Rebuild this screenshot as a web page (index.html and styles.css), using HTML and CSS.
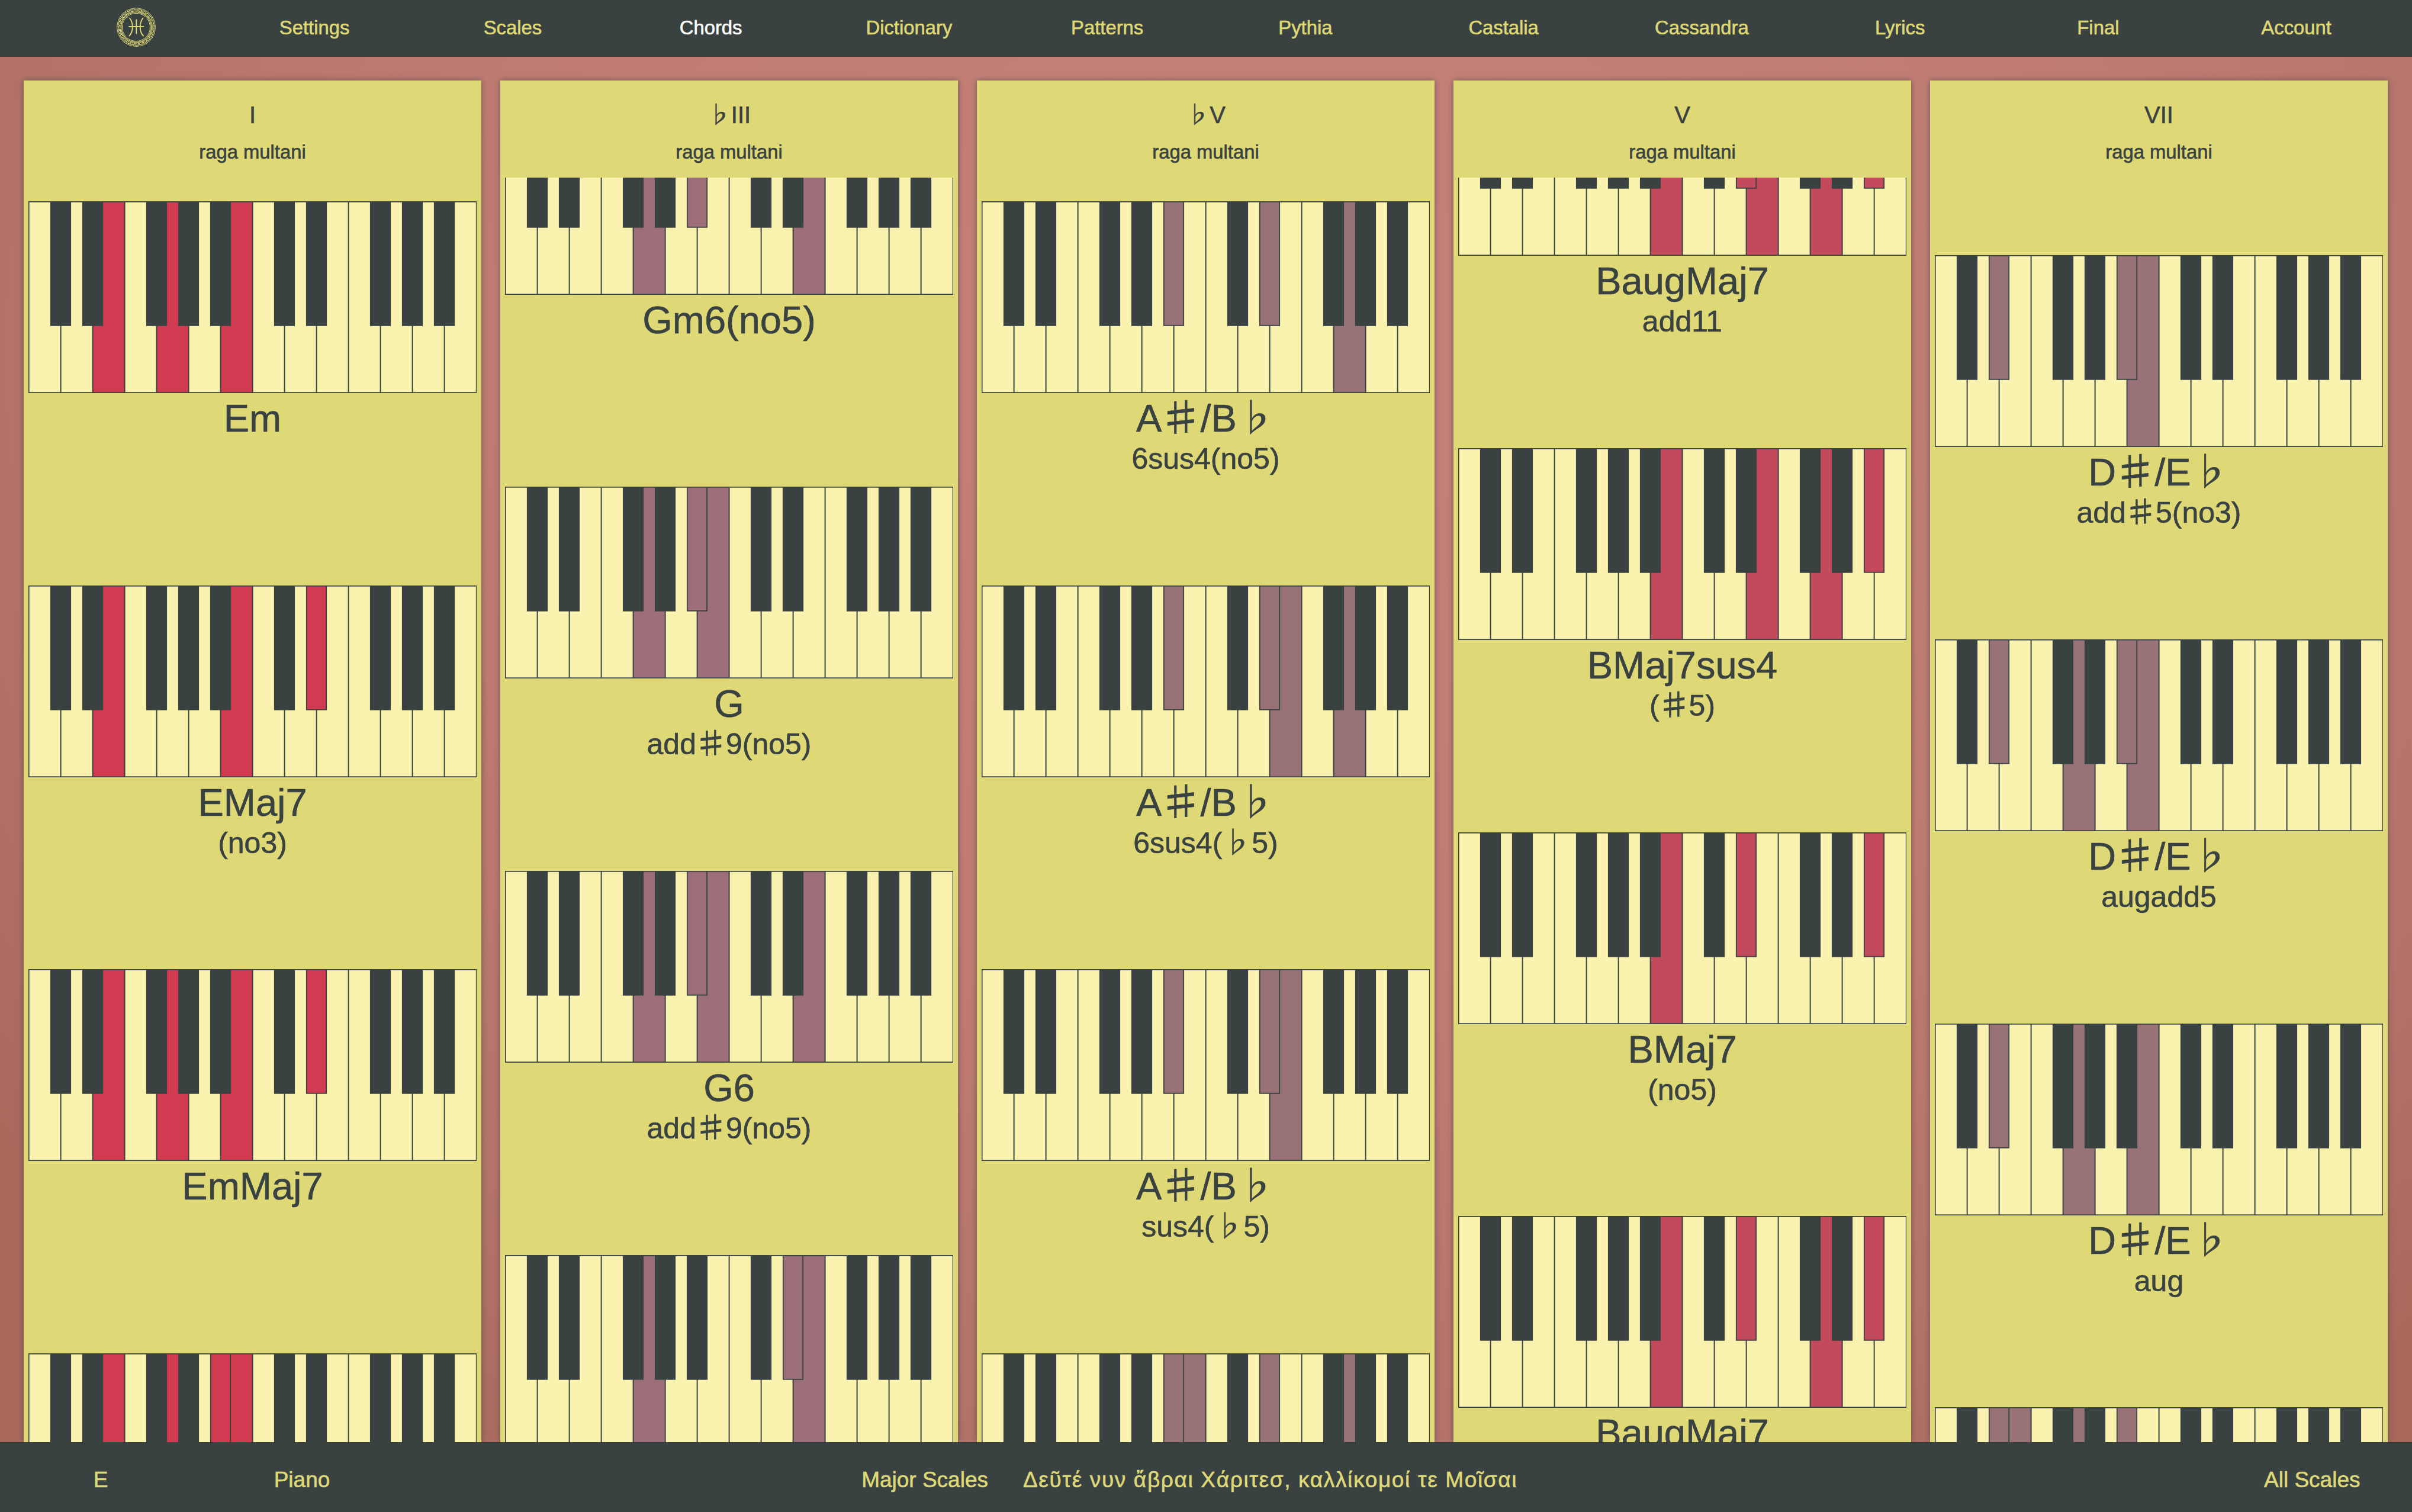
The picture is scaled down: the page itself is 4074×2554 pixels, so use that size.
FILE: index.html
```html
<!DOCTYPE html>
<html lang="en">
<head>
<meta charset="utf-8">
<title>Chords</title>
<link rel="stylesheet" href="styles.css">
</head>
<body>
<nav class="nav">
  <a class="nav-logo">
    <svg id="logo" viewBox="0 0 66 66" width="66" height="66" fill="none" stroke="#ded877">
      <circle cx="33" cy="33" r="32.3" stroke-width="1"/>
      <circle cx="33" cy="33" r="23.6" stroke-width="1"/>
      <g id="meander" stroke-width="1.1"></g>
      <path d="M22 17.5C28.5 26 28.5 40 21.500 47.500M44.500 17.500C38 26 38 40 45 47.500M33.300 20.500V43.500M21 32H45.500" stroke-width="1.900" stroke-linecap="round"/>
    </svg>
  </a>
  <a>Settings</a><a>Scales</a><a class="active">Chords</a><a>Dictionary</a><a>Patterns</a><a>Pythia</a><a>Castalia</a><a>Cassandra</a><a>Lyrics</a><a>Final</a><a>Account</a>
</nav>
<main class="board" id="board"></main>
<footer class="footer">
  <span class="root">E</span>
  <span class="instrument">Piano</span>
  <span class="family">Major Scales</span>
  <span class="motto" lang="el">Δεῦτέ νυν ἄβραι Χάριτεσ, καλλίκομοί τε Μοῖσαι</span>
  <span class="filter">All Scales</span>
</footer>
<script src="app.js"></script>
</body>
</html>
```
FILE: styles.css
```css
* { box-sizing: border-box; }
body {
  margin: 0;
  height: 2554px;
  overflow: hidden;
  display: flex;
  flex-direction: column;
  font-family: "Liberation Sans", Arial, sans-serif;
  color: #3a4241;
  -webkit-text-stroke: 0.6px currentColor;
  background: radial-gradient(ellipse 2700px 2300px at 2200px 600px, #c6837a 0%, #c07c73 50%, #b4746a 80%, #a8685c 100%);
}
.nav {
  flex: none;
  height: 96px;
  padding: 0 28px 0 29px;
  display: grid;
  grid-template-columns: repeat(12, 1fr);
  background: #3a4241;
  color: #ded877;
  font-size: 32.8px;
  line-height: 94px;
  text-align: center;
}
.nav .active { color: #fff; }
.nav-logo { display: flex; padding: 13px 0 0 168px; }
.board {
  flex: 1;
  min-height: 0;
  padding: 40px 40px 0;
  display: grid;
  grid-template-columns: repeat(5, 773px);
  gap: 32px;
}
.column {
  min-height: 0;
  display: flex;
  flex-direction: column;
  background: #ded877;
  box-shadow: 0 0 10px rgba(59, 66, 65, .6);
}
.column-head {
  flex: none;
  height: 164px;
  text-align: center;
}
.degree {
  padding-top: 35px;
  height: 83px;
  font-size: 40px;
  line-height: 46px;
}
.scale { padding-top: 19px; font-size: 32.8px; line-height: 38px; }
.chords { flex: 1; min-height: 0; overflow: hidden; }
.chord { height: 648.67px; padding: 0 8px; text-align: center; }
.keys { display: block; width: 757px; height: 324px; }
.name { padding-top: 6px; font-size: 65px; line-height: 74px; height: 80px; }
.suffix { font-size: 50px; line-height: 58px; padding-top: 2px; }
.flat, .sharp { font-family: "Noto Sans CJK JP", sans-serif; line-height: 0; }
.sharp { display: inline-block; transform: scaleX(1.3); }
.footer {
  flex: none;
  height: 118px;
  display: grid;
  grid-template-columns: 340px 340px 989px 1fr 250px;
  background: #3a4241;
  color: #ded877;
  font-size: 37px;
  line-height: 127px;
  white-space: nowrap;
}
.root, .instrument { text-align: center; }
.family { text-align: right; }
.motto { padding-left: 59px; letter-spacing: 1.65px; }
```
FILE: app.js
```js
const BLACK = [1, 2, 4, 5, 6, 8, 9, 11, 12, 13];

// Each chord: [name, suffix, lit white keys, lit black keys].
const columns = [
  { degree: 'I', color: '#d13b51', offset: 40, chords: [
    ['Em', '', [2, 4, 6], []],
    ['EMaj7', '(no3)', [2, 6], [9]],
    ['EmMaj7', '', [2, 4, 6], [9]],
    ['', '', [2, 4, 6], [6]] ] },
  { degree: '♭III', color: '#9c6f78', offset: -126.3, chords: [
    ['Gm6(no5)', '', [4, 9], [6]],
    ['G', 'add♯9(no5)', [4, 6], [6]],
    ['G6', 'add♯9(no5)', [4, 6, 9], [6]],
    ['', '', [4, 9], [9]] ] },
  { degree: '♭V', color: '#997277', offset: 40, chords: [
    ['A♯/B♭', '6sus4(no5)', [11], [6, 9]],
    ['A♯/B♭', '6sus4(♭5)', [9, 11], [6, 9]],
    ['A♯/B♭', 'sus4(♭5)', [9], [6, 9]],
    ['', '', [6, 11], [6, 9]] ] },
  { degree: 'V', color: '#c24a5c', offset: -191.7, chords: [
    ['BaugMaj7', 'add11', [6, 9, 11], [9, 13]],
    ['BMaj7sus4', '(♯5)', [6, 9, 11], [13]],
    ['BMaj7', '(no5)', [6], [9, 13]],
    ['BaugMaj7', '', [6, 11], [9, 13]] ] },
  { degree: 'VII', color: '#997277', offset: 131.3, chords: [
    ['D♯/E♭', 'add♯5(no3)', [6], [2, 6]],
    ['D♯/E♭', 'augadd5', [4, 6], [2, 6]],
    ['D♯/E♭', 'aug', [4, 6], [2]],
    ['', '', [2, 4], [2, 6]] ] },
];

const text = s => s
  .replace(/♯/g, '<span class="sharp">♯</span>')
  .replace(/♭/g, '<span class="flat">♭</span>');

function keyboard(whites, blacks, color) {
  const w = 54;
  let out = '';
  for (let i = 0; i < 14; i++) {
    out += `<rect x="${(0.7 + i * w).toFixed(2)}" y="0.8" width="${w}" height="322.400" fill="${whites.includes(i) ? color : '#faf3b0'}"/>`;
  }
  for (const b of BLACK) {
    out += `<rect x="${(b * w - 16.2).toFixed(2)}" y="0.8" width="33.400" height="209" fill="${blacks.includes(b) ? color : '#3a4241'}"/>`;
  }
  return `<svg class="keys" viewBox="0 0 757 324" stroke="#3a4241" stroke-width="1.8">${out}</svg>`;
}

document.getElementById('board').innerHTML = columns.map(c => `
  <section class="column">
    <header class="column-head">
      <div class="degree">${text(c.degree)}</div>
      <div class="scale">raga multani</div>
    </header>
    <div class="chords"><div style="margin-top:${c.offset}px">${c.chords.map(([name, suffix, wh, bl]) => `
      <article class="chord">${keyboard(wh, bl, c.color)}
        <div class="name">${text(name)}</div><div class="suffix">${text(suffix)}</div>
      </article>`).join('')}</div></div>
  </section>`).join('');

// Greek key border of the logo.
let ring = '';
for (let i = 0; i < 24; i++) {
  ring += `<path transform="rotate(${i * 15} 33 33)" d="M29.400 7.700V2.800H35V6H31.700V4.600M29.400 7.700H37"/>`;
}
document.getElementById('meander').innerHTML = ring;
```
